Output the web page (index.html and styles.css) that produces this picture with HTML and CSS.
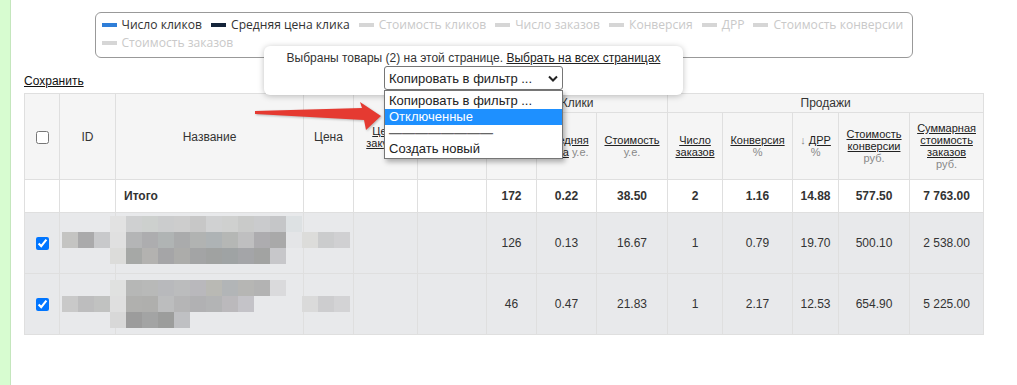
FILE: index.html
```html
<!DOCTYPE html>
<html lang="ru">
<head>
    <meta charset="UTF-8">
    <meta name="viewport" content="width=device-width, initial-scale=1.0">
    <title>Товары</title>
    <link rel="stylesheet" href="styles.css">
</head>
<body>
    <div class="layout">
        <div class="side"></div>
        <div class="content" id="content">
            <div class="legend">
                <span class="legend-item"><i class="swatch swatch-blue"></i>Число кликов</span>
                <span class="legend-item"><i class="swatch swatch-navy"></i>Средняя цена клика</span>
                <span class="legend-item off"><i class="swatch"></i>Стоимость кликов</span>
                <span class="legend-item off"><i class="swatch"></i>Число заказов</span>
                <span class="legend-item off"><i class="swatch"></i>Конверсия</span>
                <span class="legend-item off"><i class="swatch"></i>ДРР</span>
                <span class="legend-item off"><i class="swatch"></i>Стоимость конверсии</span>
                <span class="legend-item off"><i class="swatch"></i>Стоимость заказов</span>
            </div>

            <a class="save-link" href="#">Сохранить</a>

            <table class="grid">
                <colgroup>
                    <col style="width: 35px"><col style="width: 56px"><col style="width: 188px">
                    <col style="width: 50px"><col style="width: 64px"><col style="width: 69px">
                    <col style="width: 50px"><col style="width: 60px"><col style="width: 71px">
                    <col style="width: 55px"><col style="width: 70px"><col style="width: 46px">
                    <col style="width: 71px"><col style="width: 74px">
                </colgroup>
                <thead>
                    <tr class="group-row">
                        <th rowspan="2"><input type="checkbox"></th>
                        <th rowspan="2" class="id-head">ID</th>
                        <th rowspan="2">Название</th>
                        <th rowspan="2">Цена</th>
                        <th rowspan="2" class="small"><a href="#">Цена закупки</a></th>
                        <th rowspan="2" class="small"><a href="#">Остаток</a><br><span class="unit">шт.</span></th>
                        <th colspan="3">Клики</th>
                        <th colspan="5">Продажи</th>
                    </tr>
                    <tr class="head-row">
                        <th class="small"><a href="#">Число кликов</a></th>
                        <th class="small"><a href="#">Средняя цена</a> <span class="unit">у.е.</span></th>
                        <th class="small"><a href="#">Стоимость</a><br><span class="unit">у.е.</span></th>
                        <th class="small"><a href="#">Число заказов</a></th>
                        <th class="small"><a href="#">Конверсия</a><br><span class="unit">%</span></th>
                        <th class="small"><span class="unit">↓</span> <a href="#">ДРР</a><br><span class="unit">%</span></th>
                        <th class="small"><a href="#">Стоимость конверсии</a><br><span class="unit">руб.</span></th>
                        <th class="small"><a href="#">Суммарная стоимость заказов</a><br><span class="unit">руб.</span></th>
                    </tr>
                </thead>
                <tbody>
                    <tr class="total-row">
                        <td></td>
                        <td></td>
                        <td class="name-cell">Итого</td>
                        <td></td>
                        <td></td>
                        <td></td>
                        <td>172</td>
                        <td>0.22</td>
                        <td>38.50</td>
                        <td>2</td>
                        <td>1.16</td>
                        <td>14.88</td>
                        <td>577.50</td>
                        <td>7 763.00</td>
                    </tr>
                    <tr class="item-row">
                        <td><input type="checkbox" checked></td>
                        <td></td>
                        <td></td>
                        <td></td>
                        <td></td>
                        <td></td>
                        <td>126</td>
                        <td>0.13</td>
                        <td>16.67</td>
                        <td>1</td>
                        <td>0.79</td>
                        <td>19.70</td>
                        <td>500.10</td>
                        <td>2 538.00</td>
                    </tr>
                    <tr class="item-row">
                        <td><input type="checkbox" checked></td>
                        <td></td>
                        <td></td>
                        <td></td>
                        <td></td>
                        <td></td>
                        <td>46</td>
                        <td>0.47</td>
                        <td>21.83</td>
                        <td>1</td>
                        <td>2.17</td>
                        <td>12.53</td>
                        <td>654.90</td>
                        <td>5 225.00</td>
                    </tr>
                </tbody>
            </table>

            <!-- pointer drawn over the table -->
            <svg class="arrow" width="160" height="40" viewBox="0 0 160 40">
                <path d="M5 13 L112 10 L110 4 L131 18 L116 32 L114 22 L5 16 Z" fill="#e53a31"/>
            </svg>

            <div class="bulk-popup">
                <div class="bulk-text">Выбраны товары (2) на этой странице. <a href="#">Выбрать на всех страницах</a></div>
                <div class="select-box">
                    <span>Копировать в фильтр ...</span>
                    <svg width="10" height="7" viewBox="0 0 10 7"><path d="M1 1.5 L5 5.5 L9 1.5" fill="none" stroke="#222" stroke-width="2"/></svg>
                </div>
            </div>

            <ul class="select-list">
                <li>Копировать в фильтр ...</li>
                <li class="active">Отключенные</li>
                <li class="separator">————————</li>
                <li>Создать новый</li>
            </ul>
        </div>
    </div>

    <script>
        // blurred (pixelated) cells of the selected rows: [start column, colours]
        const mosaics = [
            { top: 216, rows: [
                [3, ["e2e2e2", "cfd0d1", "cdd0ce", "cbcccd", "cdcdcd", "c7c7c7", "d0d1d2", "cfd0cf", "c9cac9", "cacbcd", "c5c6c8", "dde1e3"]],
                [0, ["c4c4c2", "aaaaab", "c8c9cb", "e0e0e0", "b4b5b6", "adadaf", "b0b4b4", "aaabac", "b1b3b2", "aeb3b5", "b5b7b5", "bfbfc0", "adacaf", "a9a9a9", "e4e5e7", "dcdcda", "cbcccd", "d0d0d2"]],
                [3, ["dcdcda", "a6a8a6", "b3b2b0", "a5a5a7", "acacaa", "a3a4a5", "a0a2a1", "9fa3a4", "a4a5a8", "a2a3a2", "c7c7ca"]]
            ]},
            { top: 280, rows: [
                [3, ["e0e1e0", "b6b7b6", "b8b9b8", "b8b9bc", "bbbcbd", "b9b8bc", "b9b9b4", "b2b5b7", "b6b6b4", "b3b3b3", "dadadc"]],
                [0, ["c9c9c9", "bdbdbe", "c1c2c1", "dfdfdf", "b0b0ae", "afafad", "bcbdbe", "b5b5b6", "b1b1b3", "b3b4b5", "bbb9bc", "c4c3c8", "e8e9eb", "e8e9eb", "e8e9eb", "dadada", "cdcdcf", "d3d3d5"]],
                [3, ["d8d8d8", "9c9c9c", "a3a4a4", "9c9d9c", "bfc0c3"]]
            ]}
        ];

        const content = document.getElementById("content");
        mosaics.forEach((m) => {
            const box = document.createElement("div");
            box.className = "mosaic";
            box.style.top = m.top + "px";
            m.rows.forEach(([start, colours]) => {
                const row = document.createElement("div");
                row.className = "mosaic-row";
                row.style.marginLeft = start * 16 + "px";
                colours.forEach((c) => {
                    const cell = document.createElement("span");
                    cell.style.background = "#" + c;
                    row.appendChild(cell);
                });
                box.appendChild(row);
            });
            content.appendChild(box);
        });
    </script>
</body>
</html>
```

FILE: styles.css
```css
body {
    margin: 0;
    font-family: "Liberation Sans", Arial, sans-serif;
    font-size: 12px;
    color: #333;
    background: #fff;
}
.layout {
    display: flex;
    min-height: 100vh;
}
.side {
    width: 10px;
    flex-shrink: 0;
    background: #d7fcd0;
    border-right: 1px solid #c4e6bd;
}
.content {
    position: relative;
    width: 959px;
    margin-left: 13px;
}
.legend {
    width: 818px;
    box-sizing: border-box;
    margin: 12px auto 0;
    padding: 3px 0 5px 6px;
    border: 1px solid #999;
    border-radius: 6px;
    display: flex;
    flex-wrap: wrap;
    column-gap: 9px;
    font-family: "Open Sans", sans-serif;
    font-size: 12.1px;
    line-height: 18px;
}
.legend-item {
    display: inline-flex;
    align-items: center;
    gap: 5px;
    color: #333;
}
.legend-item.off {
    color: #c9c9c9;
}
.swatch {
    width: 15px;
    height: 4px;
    background: #d6d6d6;
}
.swatch-blue {
    background: #2f7ed8;
}
.swatch-navy {
    background: #14243a;
}
.save-link {
    display: block;
    width: max-content;
    margin-top: 16px;
    line-height: 14px;
    color: #111;
}
.grid {
    margin-top: 5px;
    width: 959px;
    table-layout: fixed;
    border-collapse: collapse;
}
.grid th, .grid td {
    border: 1px solid #dfdfdf;
    padding: 0 4px;
    text-align: center;
    vertical-align: middle;
}
.grid th {
    background: #f5f5f5;
    font-weight: normal;
    color: #333;
}
.grid th.small {
    font-size: 11px;
}
.grid th a {
    color: #222;
}
.unit {
    color: #888;
}
.id-head {
    color: #5b2333;
}
.group-row {
    height: 19px;
}
.head-row {
    height: 67px;
}
.total-row {
    height: 33px;
    font-weight: bold;
}
.total-row td {
    background: #fff;
}
.total-row .name-cell {
    text-align: left;
    padding-left: 8px;
}
.item-row {
    height: 61px;
}
.item-row td {
    background: #e8e9eb;
}
.grid input {
    margin: 0;
    width: 13px;
    height: 13px;
    vertical-align: middle;
}
.mosaic {
    position: absolute;
    left: 38px;
}
.mosaic-row {
    display: flex;
}
.mosaic-row span {
    width: 16px;
    height: 16px;
}
.arrow {
    position: absolute;
    left: 226px;
    top: 98px;
    filter: drop-shadow(1px 1px 1px rgba(0, 0, 0, 0.25));
}
.bulk-popup {
    position: absolute;
    left: 240px;
    top: 46px;
    width: 419px;
    height: 49px;
    box-sizing: border-box;
    padding-top: 5px;
    background: #fff;
    border-radius: 6px;
    box-shadow: 0 1px 6px rgba(0, 0, 0, 0.25);
    text-align: center;
}
.bulk-text {
    line-height: 14px;
    color: #333;
}
.bulk-text a {
    color: #222;
}
.select-box {
    width: 179px;
    height: 24px;
    margin: 1px auto 0;
    box-sizing: border-box;
    padding: 0 4px;
    border: 1px solid #767676;
    border-radius: 3px;
    display: flex;
    align-items: center;
    justify-content: space-between;
    font-size: 13px;
    color: #222;
}
.select-list {
    position: absolute;
    left: 360px;
    top: 90px;
    width: 179px;
    box-sizing: border-box;
    margin: 0;
    padding: 2px 0 1px;
    list-style: none;
    background: #fff;
    border: 1px solid #767676;
    box-shadow: 2px 3px 5px rgba(0, 0, 0, 0.3);
    font-size: 13px;
    line-height: 16px;
    color: #222;
}
.select-list li {
    padding: 0 4px;
    white-space: nowrap;
    overflow: hidden;
}
.select-list .active {
    background: #1e90ff;
    color: #fff;
}
.select-list .separator {
    color: #666;
    font-weight: bold;
}
```
